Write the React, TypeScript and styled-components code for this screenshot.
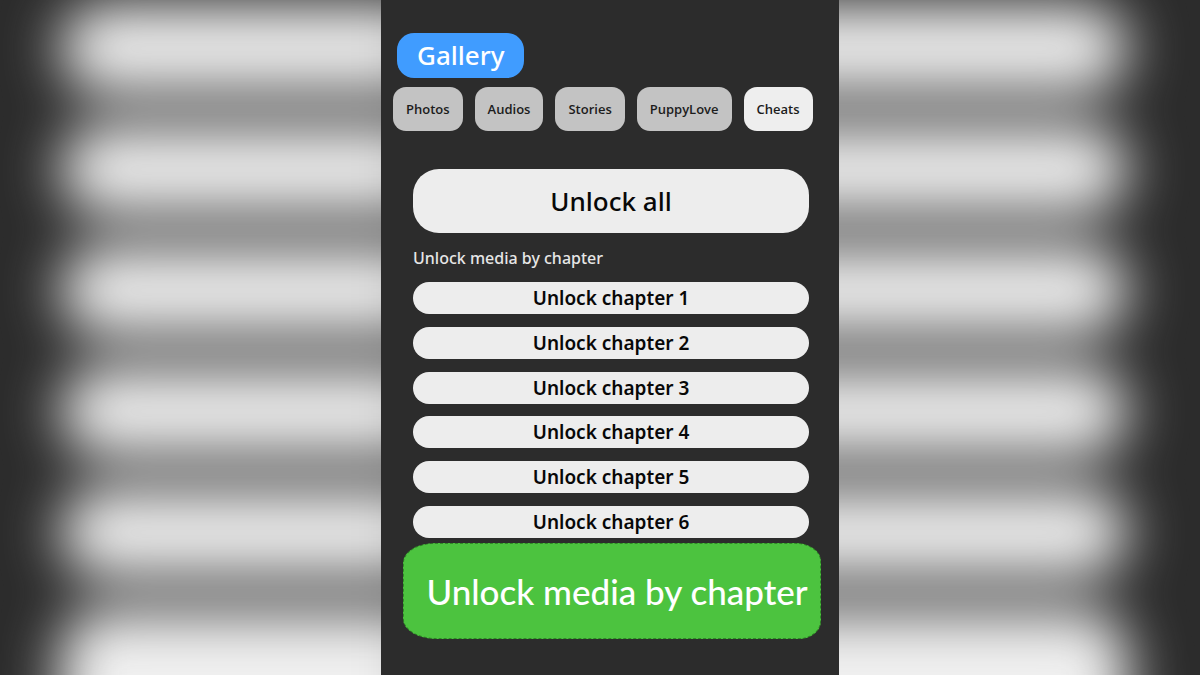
import React from "react";
import styled, { createGlobalStyle } from "styled-components";

const GlobalStyle = createGlobalStyle`
  *, *::before, *::after { box-sizing: border-box; }
  body {
    margin: 0;
    background: #2c2c2c;
    font-family: "Noto Sans", "Open Sans", sans-serif;
  }
  button {
    font-family: inherit;
    border: 0;
    padding: 0;
    margin: 0;
    cursor: pointer;
  }
`;

const Page = styled.div`
  position: relative;
  min-height: 100vh;
  overflow: hidden;
  display: grid;
  grid-template-columns: 381fr minmax(458px, 458fr) 361fr;
`;

/* Out-of-focus enlargement of the chapter list, behind the panel */
const Backdrop = styled.div`
  position: absolute;
  inset: 0;
  display: flex;
  flex-direction: column;
  gap: 34px;
  padding: 5px 6% 0 5%;
  filter: blur(28px);
`;

const BackdropBar = styled.div`
  flex: none;
  height: 87px;
  border-radius: 44px;
  background: linear-gradient(
    90deg,
    #f0f0f0 33%,
    #a8a8a8 33%,
    #a8a8a8 67%,
    #f0f0f0 67%
  );
  &:last-child {
    height: 200px;
  }
`;

const Panel = styled.main`
  position: relative;
  grid-column: 2;
  display: flex;
  flex-direction: column;
  padding: 33px 12px 36px;
  background: #2c2c2c;
`;

const GalleryButton = styled.button`
  align-self: flex-start;
  margin-left: 4px;
  height: 45px;
  padding: 0 20px 2px;
  border-radius: 17px;
  background: #409cff;
  color: #fff;
  font-size: 26px;
  font-weight: 500;
  line-height: 42px;
`;

const Tabs = styled.nav`
  display: flex;
  gap: 12px;
  margin-top: 9px;
`;

const Tab = styled.button<{ $active?: boolean }>`
  height: 44px;
  padding: 0 13px;
  border-radius: 13px;
  background: ${(p) => (p.$active ? "#eeeeee" : "#c3c3c3")};
  color: #1c1c1c;
  font-family: "Open Sans", "Noto Sans", sans-serif;
  font-size: 13px;
  font-weight: 600;
  line-height: 44px;
`;

const Cheats = styled.section`
  display: flex;
  flex-direction: column;
  padding: 0 18px 0 20px;
  margin-top: 38px;
`;

const PillButton = styled.button<{ $large?: boolean }>`
  flex: none;
  height: ${(p) => (p.$large ? 64 : 32)}px;
  border-radius: ${(p) => (p.$large ? 26 : 16)}px;
  background: #ededed;
  color: #080808;
  font-size: ${(p) => (p.$large ? 26 : 19)}px;
  font-weight: ${(p) => (p.$large ? 500 : 600)};
  line-height: ${(p) => (p.$large ? 64 : 32)}px;
`;

const SectionTitle = styled.h2`
  margin: 13px 0 12px;
  color: #e6e6e6;
  font-size: 16px;
  font-weight: 500;
  line-height: 24px;
`;

const ChapterList = styled.div`
  display: flex;
  flex-direction: column;
  justify-content: space-between;
  min-height: 256px;
`;

const Caption = styled.p`
  margin: 5px 6px 0 10px;
  height: 96px;
  display: flex;
  align-items: center;
  justify-content: center;
  padding-left: 10px;
  border: 1px dashed #2f8a26;
  border-radius: 32px 26px 22px 34px / 20px 18px 18px 20px;
  background: #4cc33f;
  color: #fff;
  font-family: Lato, "Noto Sans", sans-serif;
  font-size: 35px;
  font-weight: 500;
  line-height: 48px;
  white-space: nowrap;
`;

const tabs = ["Photos", "Audios", "Stories", "PuppyLove", "Cheats"];
const chapters = [1, 2, 3, 4, 5, 6];

export default function App() {
  return (
    <Page>
      <GlobalStyle />
      <Backdrop aria-hidden="true">
        {chapters.map((n) => (
          <BackdropBar key={n} />
        ))}
      </Backdrop>
      <Panel>
        <GalleryButton type="button">Gallery</GalleryButton>
        <Tabs>
          {tabs.map((name) => (
            <Tab key={name} type="button" $active={name === "Cheats"}>
              {name}
            </Tab>
          ))}
        </Tabs>
        <Cheats>
          <PillButton type="button" $large>
            Unlock all
          </PillButton>
          <SectionTitle>Unlock media by chapter</SectionTitle>
          <ChapterList>
            {chapters.map((n) => (
              <PillButton key={n} type="button">
                {`Unlock chapter ${n}`}
              </PillButton>
            ))}
          </ChapterList>
        </Cheats>
        <Caption>Unlock media by chapter</Caption>
      </Panel>
    </Page>
  );
}
